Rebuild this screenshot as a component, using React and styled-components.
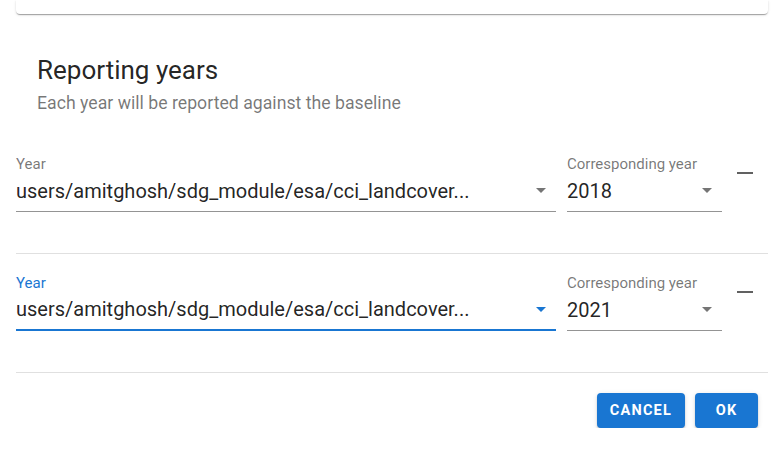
import React from 'react';
import styled, { createGlobalStyle } from 'styled-components';

const GlobalStyle = createGlobalStyle`
  body {
    margin: 0;
    background: #fff;
    font-family: Roboto, "Liberation Sans", sans-serif;
  }
`;

const Page = styled.div`
  padding: 0 16px;
  width: 784px;
  box-sizing: border-box;
`;

const TopCard = styled.div`
  height: 14px;
  background: #fff;
  border-radius: 0 0 4px 4px;
  box-shadow: 0 2px 1px -1px rgba(0, 0, 0, 0.2), 0 1px 1px 0 rgba(0, 0, 0, 0.14),
    0 1px 3px 0 rgba(0, 0, 0, 0.12);
`;

const Header = styled.div`
  padding: 40px 21px 0;
`;

const Title = styled.h2`
  margin: 0;
  font-size: 26px;
  font-weight: 400;
  line-height: 32px;
  color: rgba(0, 0, 0, 0.87);
`;

const Subtitle = styled.p`
  margin: 5px 0 0;
  font-size: 17.7px;
  line-height: 24px;
  color: rgba(0, 0, 0, 0.54);
`;

const Row = styled.div`
  display: flex;
  align-items: flex-start;
  gap: 11px;
  padding: ${(p) => (p.first ? '41px' : '21px')} 0 41px;
  border-bottom: 1px solid #e0e0e0;
`;

const Field = styled.div`
  width: ${(p) => p.width}px;
  flex: none;
`;

const Label = styled.div`
  font-size: 15px;
  line-height: 17px;
  color: ${(p) => (p.active ? '#1976d2' : 'rgba(0, 0, 0, 0.54)')};
`;

const Control = styled.div`
  display: flex;
  align-items: center;
  height: 38px;
  padding-bottom: 4px;
  margin-top: 1px;
  border-bottom: ${(p) => (p.active ? '2px solid #1976d2' : '1px solid #949494')};
  box-sizing: border-box;
`;

const Value = styled.span`
  flex: 1;
  min-width: 0;
  font-size: 20px;
  color: rgba(0, 0, 0, 0.87);
  white-space: nowrap;
  overflow: hidden;
`;

const Caret = styled.span`
  width: 0;
  height: 0;
  margin: 0 10px 0 12px;
  border-left: 5px solid transparent;
  border-right: 5px solid transparent;
  border-top: 5px solid ${(p) => (p.active ? '#1976d2' : '#757575')};
`;

const Remove = styled.button`
  margin: 7px 0 0 0;
  width: 24px;
  height: 20px;
  padding: 0;
  border: none;
  background: none;
  display: flex;
  align-items: center;
  justify-content: center;
  cursor: pointer;
  &::before {
    content: '';
    width: 16px;
    height: 2px;
    background: #616161;
  }
`;

const Actions = styled.div`
  display: flex;
  justify-content: flex-end;
  gap: 10px;
  padding: 20px 10px 0 0;
`;

const Button = styled.button`
  height: 35px;
  min-width: 63px;
  padding: 0 13px;
  border: none;
  border-radius: 4px;
  background: #1976d2;
  color: #fff;
  font-family: Roboto, "Liberation Sans", sans-serif;
  font-size: 14.5px;
  font-weight: 700;
  letter-spacing: 1.2px;
  box-shadow: 0 3px 1px -2px rgba(0, 0, 0, 0.2), 0 2px 2px 0 rgba(0, 0, 0, 0.14),
    0 1px 5px 0 rgba(0, 0, 0, 0.12);
`;

const rows = [
  { year: 'users/amitghosh/sdg_module/esa/cci_landcover...', target: '2018', active: false },
  { year: 'users/amitghosh/sdg_module/esa/cci_landcover...', target: '2021', active: true },
];

export default function App() {
  return (
    <Page>
      <GlobalStyle />
      <TopCard />
      <Header>
        <Title>Reporting years</Title>
        <Subtitle>Each year will be reported against the baseline</Subtitle>
      </Header>
      {rows.map((r, i) => (
        <Row key={i} first={i === 0}>
          <Field width={540}>
            <Label active={r.active}>Year</Label>
            <Control active={r.active}>
              <Value>{r.year}</Value>
              <Caret active={r.active} />
            </Control>
          </Field>
          <Field width={155}>
            <Label>Corresponding year</Label>
            <Control>
              <Value>{r.target}</Value>
              <Caret />
            </Control>
          </Field>
          <Remove aria-label="remove" />
        </Row>
      ))}
      <Actions>
        <Button>CANCEL</Button>
        <Button>OK</Button>
      </Actions>
    </Page>
  );
}
